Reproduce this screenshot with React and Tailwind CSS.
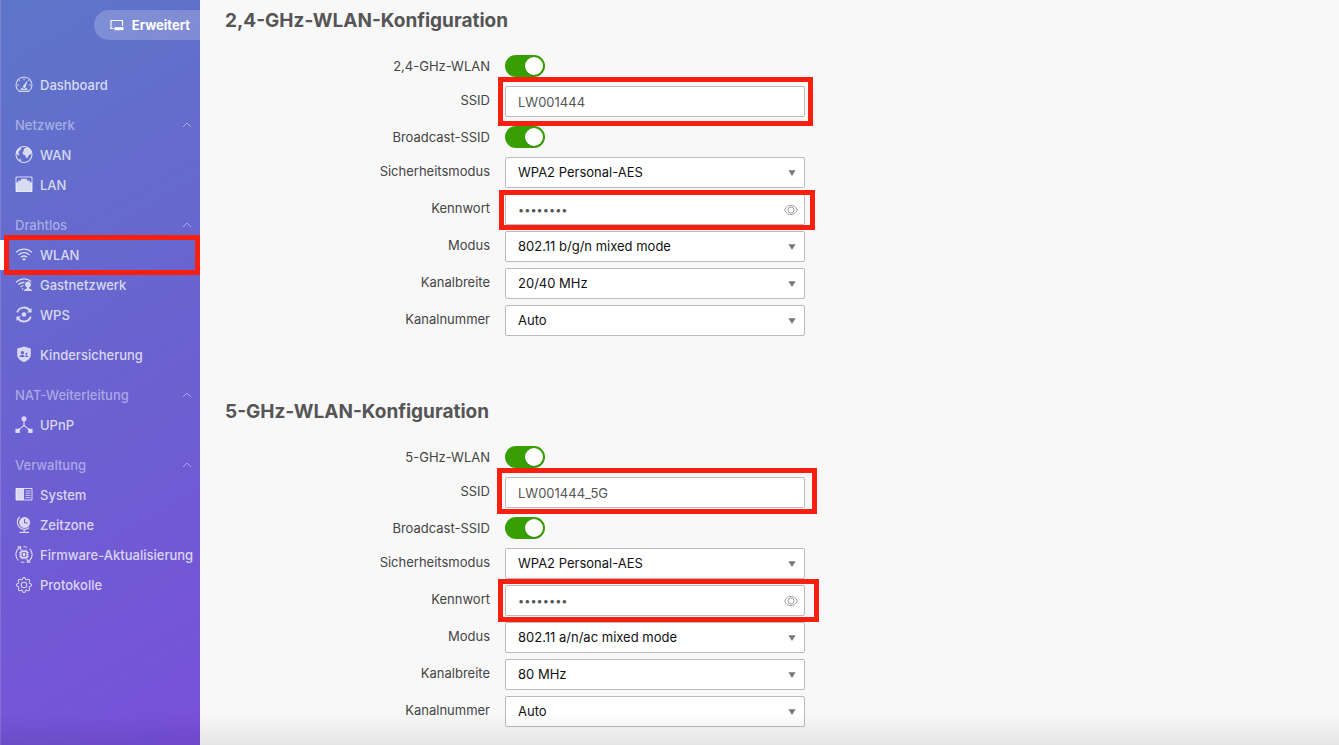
import { useState } from 'react'
import { BsGear } from 'react-icons/bs'

function Icon({ children }) {
  return (
    <svg className="size-[18px] shrink-0" viewBox="0 0 18 18" fill="none" stroke="currentColor" aria-hidden="true">
      {children}
    </svg>
  )
}

const icons = {
  dashboard: (
    <Icon>
      <path d="M4.2 15.4a8 8 0 1 1 9.6 0z" strokeWidth="1.1" strokeLinejoin="round" />
      <path d="M9 2v2M4 4l1 1M14 4l-1 1M2 9h2M14 9h2" strokeWidth="0.9" />
      <path d="M8 10.5l4-5-2 6z" fill="currentColor" strokeWidth="0.6" />
      <path d="M5.5 13.5c.5-1 2-1.5 3.5-1.5s3 .5 3.5 1.5z" strokeWidth="0.9" />
    </Icon>
  ),
  wan: (
    <Icon>
      <circle cx="9" cy="8.5" r="8" strokeWidth="1.1" />
      <path
        d="M9.2 2.6l2.2-1.2 3 1 1.8 2.6.4 2.8-1.6.8-1.6 1.2-1 2.4-1.6-.8-.6-2.2-2-.6-.8-2.2 1.2-1.4z"
        fill="currentColor"
        stroke="none"
      />
      <path d="M5 2l1.5.5-1 1.5L4 5l-.5 2 .8 1.2-.6 1.4-1.5-.8L1 7l1-2.5z" fill="currentColor" stroke="none" />
      <path d="M4 13.4l1.4-.6.8 1.2-.6 1.2z" fill="currentColor" stroke="none" />
    </Icon>
  ),
  lan: (
    <Icon>
      <path d="M1 1h16v14.5H1z" strokeWidth="1" />
      <path d="M1 6.2h2.2V4.4H6V2.8h6v1.6h2.8v1.8H17v9.3H1z" fill="currentColor" stroke="none" />
    </Icon>
  ),
  wlan: (
    <Icon>
      <path d="M1 6.4c4.6-4.4 11.4-4.4 16 0M3.4 8.9c3.3-3 7.9-3 11.2 0M5.9 11.3c1.9-1.6 4.3-1.6 6.2 0" strokeWidth="1.3" />
      <circle cx="9" cy="13.3" r="1.3" fill="currentColor" stroke="none" />
    </Icon>
  ),
  guest: (
    <Icon>
      <path d="M1 6.2c4.4-4.2 10.6-4.4 15.2-.8M3.4 8.6c1.8-1.6 3.8-2.2 6-2.1M5.6 11c.9-.8 1.8-1.2 2.8-1.3M7 13.4l1.2-1" strokeWidth="1.3" />
      <circle cx="13" cy="8.4" r="2.9" fill="currentColor" stroke="none" />
      <path d="M12 11h2v1.6c1.8.2 2.8.8 3 2.4H9c.2-1.6 1.2-2.2 3-2.4z" fill="currentColor" stroke="none" />
    </Icon>
  ),
  wps: (
    <Icon>
      <path d="M2.2 6.4a7.2 7.2 0 0 1 12.6-2M15.8 10.6a7.2 7.2 0 0 1-12.6 2" strokeWidth="1.8" />
      <path d="M16.6 2v4.6H12zM1.4 15v-4.6H6z" fill="currentColor" stroke="none" />
      <circle cx="9" cy="8.5" r="2.3" fill="currentColor" stroke="none" />
    </Icon>
  ),
  shield: (
    <Icon>
      <path
        d="M9 .4l6.8 2v6.2c0 3.6-2.8 6.2-6.8 7.6-4-1.4-6.8-4-6.8-7.6V2.4zM7.4 5a1.7 1.7 0 1 0 0 3.4 1.7 1.7 0 0 0 0-3.4zM4.6 10.9h5c0-1.4-1-2-2.5-2s-2.5.6-2.5 2zM11.4 6.8a1.1 1.1 0 1 0 0 2.2 1.1 1.1 0 0 0 0-2.2zM10.3 10.9h3c0-1-.6-1.5-1.8-1.5-.5 0-.9.1-1.2.3z"
        fill="currentColor"
        fillRule="evenodd"
        stroke="none"
      />
    </Icon>
  ),
  upnp: (
    <Icon>
      <circle cx="9" cy="2.7" r="2.5" fill="currentColor" stroke="none" />
      <path d="M9 4v5.4M9 9.4l-6 5M9 9.4l6 5" strokeWidth="1.2" />
      <path d="M.4 12.8h4.4V17H.4zM13.2 12.8h4.4V17h-4.4z" fill="currentColor" stroke="none" />
    </Icon>
  ),
  system: (
    <Icon>
      <path d="M1 2.5h16V14H1z" strokeWidth="1" />
      <path d="M1 2.5h8V14H1z" fill="currentColor" stroke="none" />
      <path d="M10.5 5h5M10.5 7.2h5M10.5 9.4h5M10.5 11.6h5" strokeWidth="0.9" />
    </Icon>
  ),
  clock: (
    <Icon>
      <circle cx="9.6" cy="6.6" r="5.5" fill="currentColor" stroke="none" />
      <path d="M9.6 3v4h3" stroke="#6d5bd2" strokeWidth="1" />
      <path d="M4.6.8C1.6 3.4 1.6 8.6 4.4 11.4c2.6 2.6 7 2.8 9.8.2M9.2 13.4v2.4M4.6 16.4h9.4" strokeWidth="1.2" />
    </Icon>
  ),
  firmware: (
    <Icon>
      <path d="M5.2 1.4C.4 3.8-.6 10.6 3.4 14.4M8.4.8c1.4-.2 2.6 0 3.8.5M12.8 15.6c4.8-2.4 5.8-9.2 1.8-13M9.6 16.2c-1.4.2-2.6 0-3.8-.5" strokeWidth="1.1" />
      <path d="M2.6.9h3.1v3.2M15.4 16.1h-3.1v-3.2" strokeWidth="1.1" />
      <path d="M6 5.5h6v6H6z" strokeWidth="1.3" />
      <path d="M8 7.5h2v2H8z" fill="currentColor" strokeWidth="0.6" />
      <path d="M7 3.6v2M9 3.6v2M11 3.6v2M7 11.4v2M9 11.4v2M11 11.4v2M4.1 6.5h2M4.1 8.5h2M4.1 10.5h2M11.9 6.5h2M11.9 8.5h2M11.9 10.5h2" strokeWidth="0.9" />
    </Icon>
  ),
  gear: <BsGear className="mx-px size-4 shrink-0" aria-hidden="true" />,
}

const menu = [
  { items: [{ label: 'Dashboard', icon: 'dashboard' }] },
  {
    title: 'Netzwerk',
    items: [
      { label: 'WAN', icon: 'wan' },
      { label: 'LAN', icon: 'lan' },
    ],
  },
  {
    title: 'Drahtlos',
    items: [
      { label: 'WLAN', icon: 'wlan', active: true },
      { label: 'Gastnetzwerk', icon: 'guest' },
      { label: 'WPS', icon: 'wps' },
    ],
  },
  { items: [{ label: 'Kindersicherung', icon: 'shield' }] },
  { title: 'NAT-Weiterleitung', items: [{ label: 'UPnP', icon: 'upnp' }] },
  {
    title: 'Verwaltung',
    items: [
      { label: 'System', icon: 'system' },
      { label: 'Zeitzone', icon: 'clock' },
      { label: 'Firmware-Aktualisierung', icon: 'firmware' },
      { label: 'Protokolle', icon: 'gear' },
    ],
  },
]

const bands = [
  {
    id: 'wlan24',
    title: '2,4-GHz-WLAN-Konfiguration',
    enableLabel: '2,4-GHz-WLAN',
    ssid: 'LW001444',
    mode: '802.11 b/g/n mixed mode',
    width: '20/40 MHz',
    ssidMark: '-top-[9px] -bottom-[9px] -left-[7px] -right-2',
    keyMark: '-top-1 -bottom-[5px] -left-1.5 -right-2.5',
  },
  {
    id: 'wlan5',
    title: '5-GHz-WLAN-Konfiguration',
    enableLabel: '5-GHz-WLAN',
    ssid: 'LW001444_5G',
    mode: '802.11 a/n/ac mixed mode',
    width: '80 MHz',
    ssidMark: '-top-[9px] -bottom-1.5 -left-2 -right-3',
    keyMark: '-top-1.5 -bottom-1.5 -left-[7px] -right-3.5',
  },
]

function Mark({ className }) {
  return <span className={`pointer-events-none absolute z-10 border-5 border-[#f61f10] ${className}`} />
}

function Sidebar() {
  return (
    <aside className="w-50 shrink-0 border-l border-white/15 bg-linear-150 from-[#5d76c9] via-[#6a62d0] to-[#784fda] pt-2.5">
      <div className="flex justify-end">
        <button
          type="button"
          className="flex h-[30px] items-center gap-2 rounded-l-full bg-white/20 pr-2.5 pl-4 text-[13px] leading-[22px] font-bold text-white"
        >
          <svg className="h-3 w-3.5" viewBox="0 0 14 12" fill="none" stroke="currentColor" aria-hidden="true">
            <path d="M3.5 9.5H1v-8h11.5V7" strokeWidth="1.1" />
            <path d="M4.5 8.2h9v3h-9z" fill="currentColor" stroke="none" />
          </svg>
          Erweitert
        </button>
      </div>
      <nav className="mt-[30px] flex flex-col gap-2.5 text-[13px] leading-[22px] font-medium text-white/75">
        {menu.map((group) => (
          <div key={group.items[0].label}>
            {group.title && (
              <button
                type="button"
                className="flex h-[30px] w-full items-center justify-between pr-2 pl-3.5 text-white/45"
              >
                {group.title}
                <svg className="h-1.5 w-2.5" viewBox="0 0 10 6" fill="none" stroke="currentColor" aria-hidden="true">
                  <path d="M1 5l4-4 4 4" />
                </svg>
              </button>
            )}
            {group.items.map((item) => (
              <a key={item.label} href="#" className="relative flex h-[30px] items-center gap-[7px] pl-3.5">
                {item.active && <span className="absolute inset-y-0 -left-px w-[5px] bg-white" />}
                {icons[item.icon]}
                {item.label}
                {item.active && <Mark className="-top-[5px] -bottom-[5px] left-[3px] right-0" />}
              </a>
            ))}
          </div>
        ))}
      </nav>
    </aside>
  )
}

function Row({ id, label, short, children }) {
  return (
    <div className={`flex items-center gap-[15px] ${short ? 'h-7' : 'h-[31px]'}`}>
      <label
        htmlFor={id}
        className={`w-[265px] text-right text-[13px] leading-[22px] text-[#444] ${short ? '' : 'pb-[3px]'}`}
      >
        {label}
      </label>
      {children}
    </div>
  )
}

function Toggle({ id }) {
  return (
    <input
      id={id}
      type="checkbox"
      role="switch"
      defaultChecked
      className="relative h-[22px] w-10 appearance-none rounded-full bg-[#bbb] before:absolute before:top-0.5 before:left-0.5 before:size-[18px] before:rounded-full before:bg-white before:shadow checked:bg-[#37a000] checked:before:left-5"
    />
  )
}

function SelectField({ id, value }) {
  return (
    <div className="relative h-full w-[300px]">
      <select
        id={id}
        className="h-full w-full appearance-none rounded-xs border border-[#bbb] bg-white px-3 text-[13px] text-[#111]"
      >
        <option>{value}</option>
      </select>
      <svg className="pointer-events-none absolute inset-y-0 right-[9px] my-auto h-1.5 w-2" viewBox="0 0 8 6" aria-hidden="true">
        <path d="M.4.2h7.2L4 6z" fill="#777" />
      </svg>
    </div>
  )
}

function BandForm({ band }) {
  const [showKey, setShowKey] = useState(false)
  const { id } = band

  return (
    <section>
      <h2 className="text-[19px] leading-7 font-bold text-[#555]">{band.title}</h2>
      <div className="mt-[17px] flex flex-col gap-1.5">
        <Row id={`${id}-on`} label={band.enableLabel} short>
          <Toggle id={`${id}-on`} />
        </Row>
        <Row id={`${id}-ssid`} label="SSID">
          <div className="relative h-full w-[300px]">
            <input
              id={`${id}-ssid`}
              type="text"
              defaultValue={band.ssid}
              className="h-full w-full rounded-xs border border-[#bbb] bg-white px-3 text-[13px] text-[#555]"
            />
            <Mark className={band.ssidMark} />
          </div>
        </Row>
        <Row id={`${id}-broadcast`} label="Broadcast-SSID" short>
          <Toggle id={`${id}-broadcast`} />
        </Row>
        <Row id={`${id}-security`} label="Sicherheitsmodus">
          <SelectField id={`${id}-security`} value="WPA2 Personal-AES" />
        </Row>
        <Row id={`${id}-key`} label="Kennwort">
          <div className="relative h-full w-[300px]">
            <input
              id={`${id}-key`}
              type={showKey ? 'text' : 'password'}
              defaultValue="password"
              className={`h-full w-full rounded-xs border border-[#bbb] bg-white pr-8 pl-3 text-[#555] ${showKey ? 'text-[13px]' : 'text-[11px]'}`}
            />
            <button
              type="button"
              aria-label="Kennwort anzeigen"
              className="absolute inset-y-0 right-[7px] text-[#888]"
              onClick={() => setShowKey((v) => !v)}
            >
              <svg className="h-3 w-3.5" viewBox="0 0 14 12" fill="none" stroke="currentColor" strokeWidth="0.8" aria-hidden="true">
                <path d="M.6 6C2 3 4.2 1.4 7 1.4S12 3 13.4 6C12 9 9.8 10.6 7 10.6S2 9 .6 6z" />
                <circle cx="7" cy="6" r="3" />
              </svg>
            </button>
            <Mark className={band.keyMark} />
          </div>
        </Row>
        <Row id={`${id}-mode`} label="Modus">
          <SelectField id={`${id}-mode`} value={band.mode} />
        </Row>
        <Row id={`${id}-width`} label="Kanalbreite">
          <SelectField id={`${id}-width`} value={band.width} />
        </Row>
        <Row id={`${id}-channel`} label="Kanalnummer">
          <SelectField id={`${id}-channel`} value="Auto" />
        </Row>
      </div>
    </section>
  )
}

export default function App() {
  return (
    <div className="relative flex min-h-screen bg-[#f8f8f8] font-['Inter',sans-serif]">
      <Sidebar />
      <main className="flex flex-1 flex-col gap-[62px] px-[25px] pt-[7px] pb-4">
        {bands.map((band) => (
          <BandForm key={band.id} band={band} />
        ))}
      </main>
      <div className="pointer-events-none absolute inset-x-0 bottom-0 h-8 bg-linear-to-t from-black/8 to-transparent" />
    </div>
  )
}
